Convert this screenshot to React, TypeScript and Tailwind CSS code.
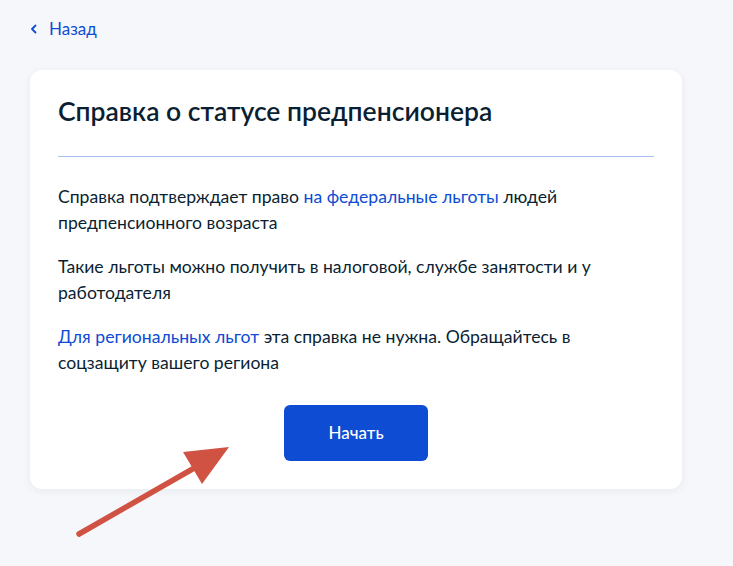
export default function App() {
  return (
    <main className="relative min-h-[566px] bg-[#f5f7fb] font-['Lato',sans-serif] text-[#0b1f33]">
      <section className="px-[30px] pt-[16px]">
        <a className="flex items-center gap-[12px] text-[17px] leading-[26px] text-[#0d4cd3]">
          <svg width="7" height="10" viewBox="0 0 7 10" fill="none">
            <path d="M5.5 1.5 2 5l3.5 3.5" stroke="#0d4cd3" strokeWidth="1.8" strokeLinecap="round" strokeLinejoin="round" />
          </svg>
          <span>Назад</span>
        </a>
        <div className="mt-[28px] w-[652px] rounded-[12px] bg-white px-[28px] pt-[24px] pb-[28px] shadow-[0_2px_10px_rgba(11,31,51,0.06)]">
          <h1 className="text-[26.5px] leading-[34px] font-semibold">Справка о статусе предпенсионера</h1>
          <div className="mt-[28px] h-px bg-[#a9c0f0]" />
          <div className="mt-[27px] flex flex-col gap-[19px] text-[17.6px] leading-[25.5px]">
            <p>
              Справка подтверждает право <span className="text-[#0d4cd3]">на федеральные льготы</span> людей
              предпенсионного возраста
            </p>
            <p>Такие льготы можно получить в налоговой, службе занятости и у работодателя</p>
            <p>
              <span className="text-[#0d4cd3]">Для региональных льгот</span> эта справка не нужна. Обращайтесь в
              соцзащиту вашего региона
            </p>
          </div>
          <div className="mt-[30px] flex justify-center">
            <button className="h-[56px] w-[144px] rounded-[6px] bg-[#0d4cd3] text-[17px] font-medium text-white">
              Начать
            </button>
          </div>
        </div>
      </section>
      <svg className="absolute left-0 top-0" width="733" height="566" viewBox="0 0 733 566" fill="none">
        <line x1="79" y1="534" x2="203" y2="463" stroke="#d05243" strokeWidth="5.5" strokeLinecap="round" />
        <path d="M229 447 183 452 202 484Z" fill="#d05243" />
      </svg>
    </main>
  );
}
